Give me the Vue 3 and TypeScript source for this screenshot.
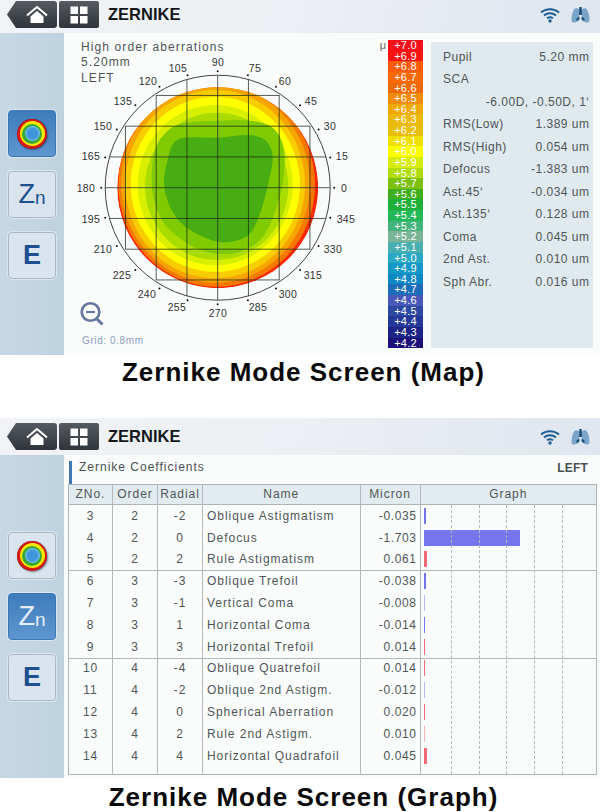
<script setup lang="ts">
type Pt = [number, number];

const screens = [
  { mode: 'map', active: 0, caption: 'Zernike Mode Screen (Map)' },
  { mode: 'graph', active: 1, caption: 'Zernike Mode Screen (Graph)' },
];

const angleLabels = [
  { t: '90', x: 218, y: 62, dot: 90 }, { t: '105', x: 178, y: 68, dot: 105 }, { t: '75', x: 255, y: 68, dot: 75 },
  { t: '120', x: 148, y: 81, dot: 120 }, { t: '60', x: 285, y: 81, dot: 60 }, { t: '135', x: 123, y: 101, dot: 135 },
  { t: '45', x: 311, y: 101, dot: 45 }, { t: '150', x: 103, y: 126, dot: 150 }, { t: '30', x: 330, y: 126, dot: 30 },
  { t: '165', x: 91, y: 156, dot: 165 }, { t: '15', x: 342, y: 156, dot: 15 }, { t: '180', x: 86, y: 188, dot: 180 },
  { t: '0', x: 344, y: 188, dot: 0 }, { t: '195', x: 91, y: 219, dot: 195 }, { t: '345', x: 346, y: 219, dot: 345 },
  { t: '210', x: 103, y: 249, dot: 210 }, { t: '330', x: 333, y: 249, dot: 330 }, { t: '225', x: 122, y: 275, dot: 225 },
  { t: '315', x: 313, y: 275, dot: 315 }, { t: '240', x: 147, y: 294, dot: 240 }, { t: '300', x: 288, y: 294, dot: 300 },
  { t: '255', x: 177, y: 307, dot: 255 }, { t: '285', x: 258, y: 307, dot: 285 }, { t: '270', x: 218, y: 313, dot: 270 },
];

const cx = 217.7;
const cy = 187.7;

function dotPos(deg: number) {
  const a = (deg * Math.PI) / 180;
  return { x: cx + 116.5 * Math.cos(a), y: cy - 116.5 * Math.sin(a) };
}

// outer bands, coordinates read off a 3x crop
const rings = [
  { c: '#f67a00', l: 55, r: 645, t: 38, b: 650 },
  { c: '#f6a500', l: 63, r: 630, t: 44, b: 638 },
  { c: '#f7cd00', l: 76, r: 615, t: 60, b: 625 },
  { c: '#ffff00', l: 92, r: 600, t: 80, b: 606 },
  { c: '#d8f000', l: 113, r: 578, t: 105, b: 586 },
  { c: '#aadc00', l: 135, r: 565, t: 128, b: 570 },
].map((r) => ({
  c: r.c,
  cx: (r.l + r.r) / 6 + 100,
  cy: (r.t + r.b) / 6 + 70,
  rx: (r.r - r.l) / 6,
  ry: (r.b - r.t) / 6,
}));

const midShape: Pt[] = [
  [250, 160], [353, 152], [450, 152], [520, 175], [552, 240], [548, 340], [520, 440], [480, 510], [420, 545],
  [353, 552], [280, 530], [200, 470], [165, 400], [155, 330], [165, 240], [200, 185],
];
const coreShape: Pt[] = [
  [265, 202], [353, 203], [440, 195], [495, 210], [518, 260], [505, 340], [480, 430], [445, 495], [380, 517],
  [320, 505], [250, 465], [210, 410], [192, 340], [205, 260], [225, 215],
];

// closed catmull-rom through the points
function smooth(src: Pt[]) {
  const p = src.map(([x, y]): Pt => [x / 3 + 100, y / 3 + 70]);
  const n = p.length;
  let d = `M${p[0][0].toFixed(1)} ${p[0][1].toFixed(1)}`;
  for (let i = 0; i < n; i++) {
    const a = p[(i + n - 1) % n];
    const b = p[i];
    const c = p[(i + 1) % n];
    const e = p[(i + 2) % n];
    const c1 = [b[0] + (c[0] - a[0]) / 6, b[1] + (c[1] - a[1]) / 6];
    const c2 = [c[0] - (e[0] - b[0]) / 6, c[1] - (e[1] - b[1]) / 6];
    d += `C${c1[0].toFixed(1)} ${c1[1].toFixed(1)} ${c2[0].toFixed(1)} ${c2[1].toFixed(1)} ${c[0].toFixed(1)} ${c[1].toFixed(1)}`;
  }
  return d + 'Z';
}
const midPath = smooth(midShape);
const corePath = smooth(coreShape);

const step = 30.75;
const halfLen = [112.5, 108.5, 92.5, 61.7];
const gridLines = [-3, -2, -1, 0, 1, 2, 3].map((k) => ({ k, pos: k * step, half: halfLen[Math.abs(k)] }));

const scaleColors = [
  '#f5101a', '#f81410', '#fb5a08', '#f96a05', '#ee6a08', '#f08c0a', '#f0a808', '#ebb80c', '#e8bd0c', '#f0e000',
  '#fdfd00', '#d6ec10', '#b0dc10', '#7cc010', '#3fae1e', '#1fb03c', '#22b858', '#44b47c', '#7cb498', '#48aeb0',
  '#28a8c4', '#1498c8', '#0c88c4', '#1c6cb8', '#4858b8', '#2c48a0', '#243898', '#1c2488', '#1c1078',
];
const scale = scaleColors.map((color, i) => ({ color, label: '+' + (7 - i / 10).toFixed(1) }));

const measures = [
  { k: 'Pupil', v: '5.20 mm' },
  { k: 'SCA', v: '' },
  { k: '', v: '-6.00D, -0.50D, 1‘' },
  { k: 'RMS(Low)', v: '1.389 um' },
  { k: 'RMS(High)', v: '0.054 um' },
  { k: 'Defocus', v: '-1.383 um' },
  { k: 'Ast.45‘', v: '-0.034 um' },
  { k: 'Ast.135‘', v: '0.128 um' },
  { k: 'Coma', v: '0.045 um' },
  { k: '2nd Ast.', v: '0.010 um' },
  { k: 'Sph Abr.', v: '0.016 um' },
];

const columns = ['ZNo.', 'Order', 'Radial', 'Name', 'Micron', 'Graph'];

const groups = [
  [
    { z: 3, o: 2, r: -2, name: 'Oblique Astigmatism', m: '-0.035' },
    { z: 4, o: 2, r: 0, name: 'Defocus', m: '-1.703' },
    { z: 5, o: 2, r: 2, name: 'Rule Astigmatism', m: '0.061' },
  ],
  [
    { z: 6, o: 3, r: -3, name: 'Oblique Trefoil', m: '-0.038' },
    { z: 7, o: 3, r: -1, name: 'Vertical Coma', m: '-0.008' },
    { z: 8, o: 3, r: 1, name: 'Horizontal Coma', m: '-0.014' },
    { z: 9, o: 3, r: 3, name: 'Horizontal Trefoil', m: '0.014' },
  ],
  [
    { z: 10, o: 4, r: -4, name: 'Oblique Quatrefoil', m: '0.014' },
    { z: 11, o: 4, r: -2, name: 'Oblique 2nd Astigm.', m: '-0.012' },
    { z: 12, o: 4, r: 0, name: 'Spherical Aberration', m: '0.020' },
    { z: 13, o: 4, r: 2, name: 'Rule 2nd Astigm.', m: '0.010' },
    { z: 14, o: 4, r: 4, name: 'Horizontal Quadrafoil', m: '0.045' },
  ],
];

function barStyle(m: string) {
  const v = parseFloat(m);
  const w = Math.max(1, (Math.abs(v) / 1.703) * 96);
  return {
    width: w.toFixed(1) + 'px',
    background: v < 0 ? '#7575ee' : '#ee6a74',
    opacity: Math.abs(v) < 0.013 ? 0.5 : 1,
  };
}
</script>

<template>
  <div class="page">
    <section v-for="s in screens" :key="s.mode" class="screen" :class="'screen-' + s.mode">
      <header class="topbar">
        <button class="nav nav-home">
          <svg width="22" height="18" viewBox="0 0 22 18">
            <path d="M1 9.500 11 1l10 8.500" fill="none" stroke="#fff" stroke-width="2" />
            <path d="M4.500 10.500 11 5l6.500 5.500V17h-13z" fill="#fff" />
          </svg>
        </button>
        <button class="nav nav-menu">
          <svg width="18" height="18" viewBox="0 0 18 18" fill="#fff">
            <rect x="0.500" y="0.500" width="7.500" height="7.500" />
            <rect x="10" y="0.500" width="7.500" height="7.500" />
            <rect x="0.500" y="10" width="7.500" height="7.500" />
            <rect x="10" y="10" width="7.500" height="7.500" />
          </svg>
        </button>
        <h1 class="title">ZERNIKE</h1>
        <div class="status">
          <svg width="20" height="16" viewBox="0 0 20 16" fill="none" stroke="#1d5f92" stroke-width="2">
            <path d="M1 5.500C6 1 14 1 19 5.500" />
            <path d="M4 8.500C7.500 5.500 12.500 5.500 16 8.500" />
            <path d="M7 11.300C8.800 10 11.200 10 13 11.300" />
            <circle cx="10" cy="14" r="1.700" fill="#1d5f92" stroke="none" />
          </svg>
          <svg width="19" height="16" viewBox="0 0 19 16">
            <path d="M8 2C6 .8 4 1 3 2.500 1.500 5 .5 9 .5 13c0 2 1.500 2.800 3 2.500 2-.4 4.500-1.300 4.500-3z" fill="#7aa5c9" />
            <path d="M11 2c2-1.200 4-1 5 .5 1.500 2.500 2.500 6.500 2.500 10.500 0 2-1.500 2.800-3 2.500-2-.4-4.500-1.300-4.500-3z" fill="#7aa5c9" />
            <path d="M8.300 0h2.400l.3 8H8z" fill="#1d5078" />
            <path d="M5.500 11.500 8.500 9.500v3l-3 1.500zM13.500 11.500l-3-2v3l3 1.500z" fill="#1d5078" />
          </svg>
        </div>
      </header>

      <div class="body">
        <aside class="sidebar">
          <button class="side-btn" :class="{ active: s.active === 0 }">
            <span class="rings"><span><span><span></span></span></span></span>
          </button>
          <button class="side-btn zn" :class="{ active: s.active === 1 }">Z<small>n</small></button>
          <button class="side-btn e">E</button>
        </aside>

        <main v-if="s.mode === 'map'" class="content map-content">
          <div class="map-col">
            <svg class="map" width="321" height="322" viewBox="64 33 321 322">
              <defs>
                <clipPath id="disc"><circle :cx="cx" :cy="cy" r="100.500" /></clipPath>
              </defs>
              <g clip-path="url(#disc)">
                <circle :cx="cx" :cy="cy" r="100.500" fill="#f92a00" />
                <ellipse v-for="r in rings" :key="r.c" :cx="r.cx" :cy="r.cy" :rx="r.rx" :ry="r.ry" :fill="r.c" />
                <path :d="midPath" fill="#7fca00" />
                <path :d="corePath" fill="#48ad12" />
              </g>
              <g v-for="g in gridLines" :key="g.k" stroke="#1f2a1f" stroke-opacity="0.75" stroke-width="1">
                <line :x1="cx + g.pos" :x2="cx + g.pos" :y1="cy - g.half" :y2="cy + g.half" />
                <line :y1="cy + g.pos" :y2="cy + g.pos" :x1="cx - g.half" :x2="cx + g.half" />
              </g>
              <circle :cx="cx" :cy="cy" r="112.500" fill="none" stroke="#444" stroke-width="1" />
              <g v-for="a in angleLabels" :key="a.t">
                <circle :cx="dotPos(a.dot).x" :cy="dotPos(a.dot).y" r="1" fill="#111" />
                <text :x="a.x" :y="a.y + 3.800" class="angle" text-anchor="middle">{{ a.t }}</text>
              </g>
              <g fill="none" stroke="#65769f">
                <circle cx="90.500" cy="312" r="8.800" stroke-width="2.600" />
                <path d="M86 312h9" stroke-width="2" />
                <path d="M97 319l5.500 5.500" stroke-width="3" />
              </g>
            </svg>
            <div class="map-info">
              <div>High order aberrations</div>
              <div>5.20mm</div>
              <div>LEFT</div>
            </div>
            <div class="grid-note">Grid: 0.8mm</div>
            <div class="unit">μ</div>
          </div>
          <div class="scale">
            <div v-for="c in scale" :key="c.label" class="scale-row" :style="{ background: c.color }">{{ c.label }}</div>
          </div>
          <div class="panel">
            <div v-for="(m, i) in measures" :key="i" class="panel-row">
              <span>{{ m.k }}</span>
              <span>{{ m.v }}</span>
            </div>
          </div>
        </main>

        <main v-else class="content graph-content">
          <div class="coef-head">
            <span class="coef-title">Zernike Coefficients</span>
            <span class="coef-side">LEFT</span>
          </div>
          <div class="coef">
            <div class="row head">
              <div v-for="c in columns" :key="c" class="cell">{{ c }}</div>
            </div>
            <div v-for="(g, gi) in groups" :key="gi" class="group">
              <div v-for="row in g" :key="row.z" class="row">
                <div class="cell">{{ row.z }}</div>
                <div class="cell">{{ row.o }}</div>
                <div class="cell">{{ row.r }}</div>
                <div class="cell name">{{ row.name }}</div>
                <div class="cell micron">{{ row.m }}</div>
                <div class="cell graph"><div class="bar" :style="barStyle(row.m)"></div></div>
              </div>
            </div>
            <div class="row filler">
              <div v-for="c in columns" :key="c" class="cell"></div>
            </div>
            <div class="graph-lines"><i v-for="n in 5" :key="n"></i></div>
          </div>
        </main>
      </div>

      <div class="caption">{{ s.caption }}</div>
    </section>
  </div>
</template>

<style scoped>
.page {
  width: 600px;
  height: 812px;
  overflow: hidden;
  background: #fff;
  font-family: "Liberation Sans", Arial, sans-serif;
}
.screen-graph {
  margin-top: 29px;
}

.topbar {
  display: flex;
  align-items: flex-start;
  height: 33px;
  padding: 1px 10px 0 7px;
  box-sizing: border-box;
  background: linear-gradient(100deg, #f1f3f6 0%, #eceff3 50%, #dfe6ef 100%);
}
.screen-graph .topbar {
  height: 37px;
  padding-top: 5px;
}
.nav {
  display: flex;
  align-items: center;
  justify-content: center;
  height: 27px;
  padding: 0;
  border: none;
  background: linear-gradient(#565b62, #2f343a);
}
.nav-home {
  width: 50px;
  padding-left: 9px;
  clip-path: polygon(9px 0, 100% 0, 100% 100%, 9px 100%, 0 50%);
  border-radius: 0 3px 3px 0;
}
.nav-menu {
  width: 40px;
  margin-left: 2px;
  border-radius: 2px;
}
.title {
  margin: 0 0 0 9px;
  font-size: 16.500px;
  line-height: 27px;
  font-weight: 700;
  letter-spacing: 0;
  color: #14171a;
}
.status {
  display: flex;
  gap: 11px;
  margin-left: auto;
  padding-top: 6px;
}

.body {
  display: flex;
  height: 322px;
}
.screen-graph .body {
  height: 323px;
}
.sidebar {
  display: flex;
  flex-direction: column;
  gap: 14px;
  width: 64px;
  flex: none;
  box-sizing: border-box;
  padding: 77px 0 0 8px;
  background: linear-gradient(90deg, #c7d8e5, #bfd2e0);
}
.side-btn {
  display: flex;
  align-items: center;
  justify-content: center;
  width: 48px;
  height: 47px;
  padding: 0;
  box-sizing: border-box;
  border: 1px solid #a7b8c6;
  border-radius: 4px;
  background: #d9e4ee;
  box-shadow: 0 0 0 1px #dbe6ee;
  color: #1d4f8e;
  font-family: inherit;
}
.side-btn.active {
  border-color: #3c77b4;
  background: linear-gradient(#3f7cbc, #5e96d0);
  color: #e6eef6;
}
.zn {
  font-size: 27px;
  font-weight: 400;
}
.zn small {
  font-size: 19px;
  margin-top: 6px;
}
.e {
  font-size: 27px;
  font-weight: 700;
}
.rings,
.rings span {
  display: flex;
  align-items: center;
  justify-content: center;
  border-radius: 50%;
}
.rings {
  width: 30px;
  height: 30px;
  background: #d81a14;
  box-shadow: 1px 1px 2px rgba(20, 40, 70, 0.5), inset 0 0 1px #600;
}
.rings > span {
  width: 25px;
  height: 25px;
  background: #f6e800;
}
.rings > span > span {
  width: 20px;
  height: 20px;
  background: #36a838;
}
.rings > span > span > span {
  width: 15px;
  height: 15px;
  background: radial-gradient(#3f95dc 45%, #7cc8e8 75%);
}

.content {
  flex: 1;
  min-width: 0;
  background: #f9fcfb;
}
.map-content {
  display: flex;
  align-items: flex-start;
}
.map-col {
  position: relative;
  width: 321px;
  height: 322px;
  flex: none;
}
.map {
  display: block;
}
.angle {
  font-size: 10.500px;
  letter-spacing: 0.400px;
  fill: #333;
}
.map-info {
  position: absolute;
  left: 17px;
  top: 7px;
  font-size: 12px;
  line-height: 15.300px;
  letter-spacing: 1.100px;
  color: #4e5456;
}
.grid-note {
  position: absolute;
  left: 18px;
  top: 302px;
  font-size: 10px;
  letter-spacing: 0.600px;
  color: #8b9dc0;
}
.unit {
  position: absolute;
  right: -1px;
  top: 6px;
  font-size: 11px;
  color: #666;
}
.scale {
  width: 35px;
  flex: none;
  margin: 7px 0 0 3px;
}
.scale-row {
  height: 10.640px;
  font-size: 11px;
  line-height: 10.640px;
  text-align: center;
  color: #fff;
  letter-spacing: 0.200px;
}
.panel {
  width: 161.500px;
  height: 306px;
  flex: none;
  margin: 9px 0 0 8px;
  box-sizing: border-box;
  padding: 3.500px 3px 0 12px;
  background: #dfe9ee;
}
.panel-row {
  display: flex;
  justify-content: space-between;
  height: 22.500px;
  font-size: 12px;
  line-height: 22.500px;
  letter-spacing: 0.500px;
  color: #4f5658;
}

.coef-head {
  display: flex;
  justify-content: space-between;
  height: 28.700px;
  padding: 6px 12px 0 5px;
  box-sizing: border-box;
  font-size: 12px;
  line-height: 12px;
}
.coef-title {
  padding-left: 7px;
  border-left: 3px solid #3f78b4;
  letter-spacing: 1px;
  color: #4a5052;
}
.coef-side {
  font-weight: 700;
  letter-spacing: 0.200px;
  color: #4a5052;
  padding-top: 1px;
}
.coef {
  position: relative;
  width: 529px;
  margin-left: 4px;
  box-sizing: border-box;
  border: 1px solid #b0b4b4;
  font-size: 12px;
  letter-spacing: 0.950px;
  color: #505658;
}
.row {
  display: grid;
  grid-template-columns: 44px 45px 45px 157.500px 60px 1fr;
  height: 21.800px;
}
.row.head {
  height: 20.300px;
  box-sizing: border-box;
  background: #e2ebef;
  border-bottom: 1px solid #b0b4b4;
}
.row.filler {
  height: 7px;
}
.group + .group {
  box-shadow: inset 0 1px #b4b8b8;
}
.cell {
  display: flex;
  align-items: center;
  justify-content: center;
  box-sizing: border-box;
  border-right: 1px solid #b4b8b8;
}
.cell:last-child {
  border-right: none;
}
.cell.name {
  justify-content: flex-start;
  padding-left: 4px;
}
.cell.micron {
  justify-content: flex-end;
  padding-right: 3px;
  letter-spacing: 0.600px;
}
.cell.graph {
  justify-content: flex-start;
  padding-left: 3.500px;
}
.bar {
  height: 16px;
}
.graph-lines {
  position: absolute;
  left: 355px;
  top: 20.300px;
  bottom: 0;
  display: flex;
  pointer-events: none;
}
.graph-lines i {
  width: 27.800px;
  box-sizing: border-box;
  border-right: 1px dashed #b4b8b8;
}

.caption {
  height: 34px;
  padding-left: 7px;
  font-size: 26px;
  line-height: 34px;
  font-weight: 700;
  letter-spacing: 1px;
  text-align: center;
  color: #0a0a0a;
}
.screen-graph .caption {
  padding-top: 2px;
}
</style>
